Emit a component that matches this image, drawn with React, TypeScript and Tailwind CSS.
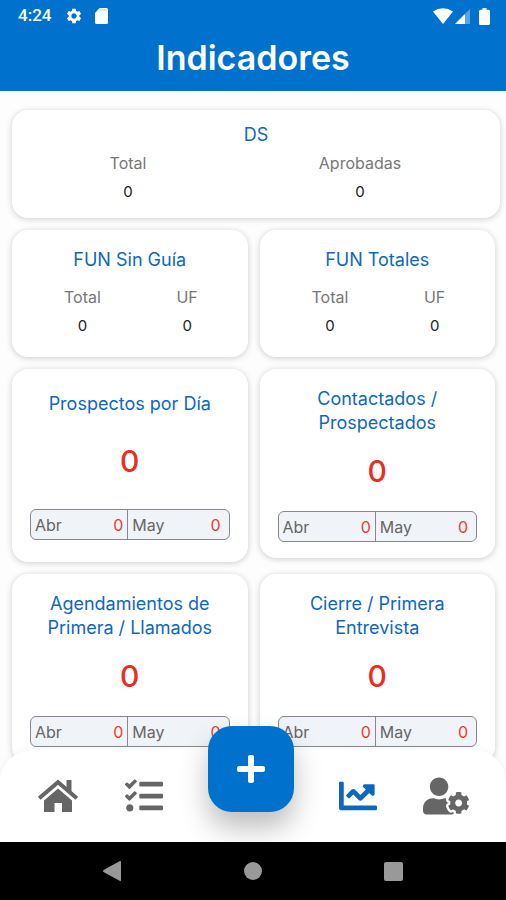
import { FaChartLine, FaPlus, FaTasks, FaUserCog } from "react-icons/fa";
import { MdSettings } from "react-icons/md";

type Stat = { label: string; value: number };

const card = "rounded-2xl bg-white shadow-[0_1px_6px_rgba(0,0,0,0.2)]";

function StatusBar() {
  return (
    <div className="flex h-8 items-center pl-[18px] pr-4">
      <span className="font-[Roboto] text-[17px] font-medium">4:24</span>
      <MdSettings className="ml-3.5 size-[18px]" />
      <svg viewBox="0 0 13 16" className="ml-3 h-4 w-[13px]" fill="currentColor">
        <path d="M4.5 0H11.5Q13 0 13 1.5V14.5Q13 16 11.5 16H1.5Q0 16 0 14.5V5Z" />
        <path d="M4.5 1.500h7v1h-7z" fill="#0072ce" opacity=".35" />
      </svg>
      <svg viewBox="0 0 20 16" className="ml-auto h-4 w-5" fill="currentColor">
        <path d="M0 3.500Q10-3 20 3.500L10 16Z" />
      </svg>
      <svg viewBox="0 0 16 16" className="ml-0.5 h-4 w-4" fill="currentColor">
        <path d="M15 1V16H0Z" opacity=".35" />
        <path d="M10 6V16H0Z" />
      </svg>
      <svg viewBox="0 0 11 17" className="ml-2 h-[17px] w-[11px]" fill="currentColor">
        <path d="M3.500 0h4v1.700h2Q11 1.700 11 3.200V15.500Q11 17 9.500 17h-8Q0 17 0 15.500V3.200Q0 1.700 1.500 1.700h2Z" />
      </svg>
    </div>
  );
}

function HomeIcon() {
  return (
    <svg viewBox="0 0 42 34" className="h-[34px] w-[42px]">
      <path d="M2.200 19.200 21 3.200l18.800 16" fill="none" stroke="currentColor" strokeWidth="4" />
      <path d="M29.500 1h5v13l-5-4.200Z" fill="currentColor" />
      <path d="M21 9.500 35 21.500V33H25V24H17.500V33H7V21.500Z" fill="currentColor" />
    </svg>
  );
}

function CardTitle({ lines }: { lines: string[] }) {
  return (
    <h2 className="text-center text-[18px] leading-6 text-[#0f67bd]">
      {lines.map((line) => (
        <span key={line} className="block whitespace-nowrap">{line}</span>
      ))}
    </h2>
  );
}

function Stats({ items }: { items: Stat[] }) {
  return (
    <dl className="grid grid-cols-2 text-center">
      {items.map((s) => (
        <div key={s.label}>
          <dt className="text-base leading-6 text-[#777]">{s.label}</dt>
          <dd className="mt-[7px] text-[15px] leading-5 text-[#222]">{s.value}</dd>
        </div>
      ))}
    </dl>
  );
}

function SmallCard({ title, items }: { title: string; items: Stat[] }) {
  return (
    <section className={`${card} pb-[21px] pt-[18px]`}>
      <CardTitle lines={[title]} />
      <div className="mt-[13px] pl-[18px] pr-2">
        <Stats items={items} />
      </div>
    </section>
  );
}

function Months() {
  return (
    <dl className="flex h-[31px] divide-x divide-[#85898c] rounded-md border border-[#85898c] bg-[#f0f4f8] text-base">
      {["Abr", "May"].map((m) => (
        <div key={m} className="flex flex-1 items-center justify-between px-1 last:pr-2">
          <dt className="text-[#666]">{m}</dt>
          <dd className="text-[#ee3a35]">0</dd>
        </div>
      ))}
    </dl>
  );
}

function MonthlyCard({ lines }: { lines: string[] }) {
  const single = lines.length === 1;
  return (
    <section className={`${card} px-[18px] ${single ? "pb-[22px] pt-[23px]" : "pb-4 pt-[18px]"}`}>
      <CardTitle lines={lines} />
      <p className={`text-center text-[30px] font-medium leading-9 text-[#ea2d20] ${single ? "mb-[30px] mt-[27px]" : "mb-[22px] mt-[18px]"}`}>
        0
      </p>
      <Months />
    </section>
  );
}

export default function App() {
  return (
    <div className="flex h-screen flex-col bg-white font-[Inter,sans-serif]">
      <header className="h-[91px] shrink-0 bg-[#0072ce] text-white">
        <StatusBar />
        <h1 className="text-center text-[34px] font-semibold leading-[52px]">Indicadores</h1>
      </header>

      <div className="relative min-h-0 flex-1">
        <main className="h-full overflow-y-auto bg-[#fdfdfd] pb-28 pl-3 pr-1.5 pt-[19px] [scrollbar-width:none]">
          <section className={`${card} pb-4 pt-[13px]`}>
            <CardTitle lines={["DS"]} />
            <div className="mt-1 pr-6">
              <Stats items={[{ label: "Total", value: 0 }, { label: "Aprobadas", value: 0 }]} />
            </div>
          </section>
          <div className="mt-3 grid grid-cols-2 items-start gap-3 pr-[5px]">
            <SmallCard title="FUN Sin Guía" items={[{ label: "Total", value: 0 }, { label: "UF", value: 0 }]} />
            <SmallCard title="FUN Totales" items={[{ label: "Total", value: 0 }, { label: "UF", value: 0 }]} />
            <MonthlyCard lines={["Prospectos por Día"]} />
            <MonthlyCard lines={["Contactados /", "Prospectados"]} />
            <MonthlyCard lines={["Agendamientos de", "Primera / Llamados"]} />
            <MonthlyCard lines={["Cierre / Primera", "Entrevista"]} />
          </div>
        </main>

        <nav className="absolute inset-x-0 bottom-0 flex h-[92px] items-center justify-between rounded-t-[32px] bg-white px-9 text-[#666] shadow-[0_0_10px_rgba(0,0,0,0.05)]">
          <button aria-label="Inicio" className="flex w-11 justify-center"><HomeIcon /></button>
          <button aria-label="Tareas" className="flex w-11 justify-center"><FaTasks className="size-[38px]" /></button>
          <button aria-label="Agregar" className="-mt-[54px] flex size-[86px] items-center justify-center rounded-3xl bg-[#0072ce] text-white shadow-[0_16px_28px_rgba(0,0,0,0.26)]">
            <FaPlus className="size-8" />
          </button>
          <button aria-label="Indicadores" className="flex w-11 justify-center text-[#0f67bd]"><FaChartLine className="size-[38px]" /></button>
          <button aria-label="Cuenta" className="flex w-12 justify-center"><FaUserCog className="size-[46px]" /></button>
        </nav>
      </div>

      <footer className="relative flex h-[58px] shrink-0 items-center justify-between bg-black pl-[102px] pr-[103px] text-[#999]">
        <button aria-label="Atrás">
          <svg viewBox="0 0 20 22" className="h-[22px] w-5" fill="currentColor"><path d="M18 1Q19 .5 19 2V20Q19 21.500 18 21L1.500 12Q.5 11 1.500 10Z" /></svg>
        </button>
        <button aria-label="Pantalla de inicio" className="size-[18px] rounded-full bg-[#999]" />
        <button aria-label="Recientes" className="size-[19px] rounded-[2px] bg-[#999]" />
      </footer>
    </div>
  );
}
